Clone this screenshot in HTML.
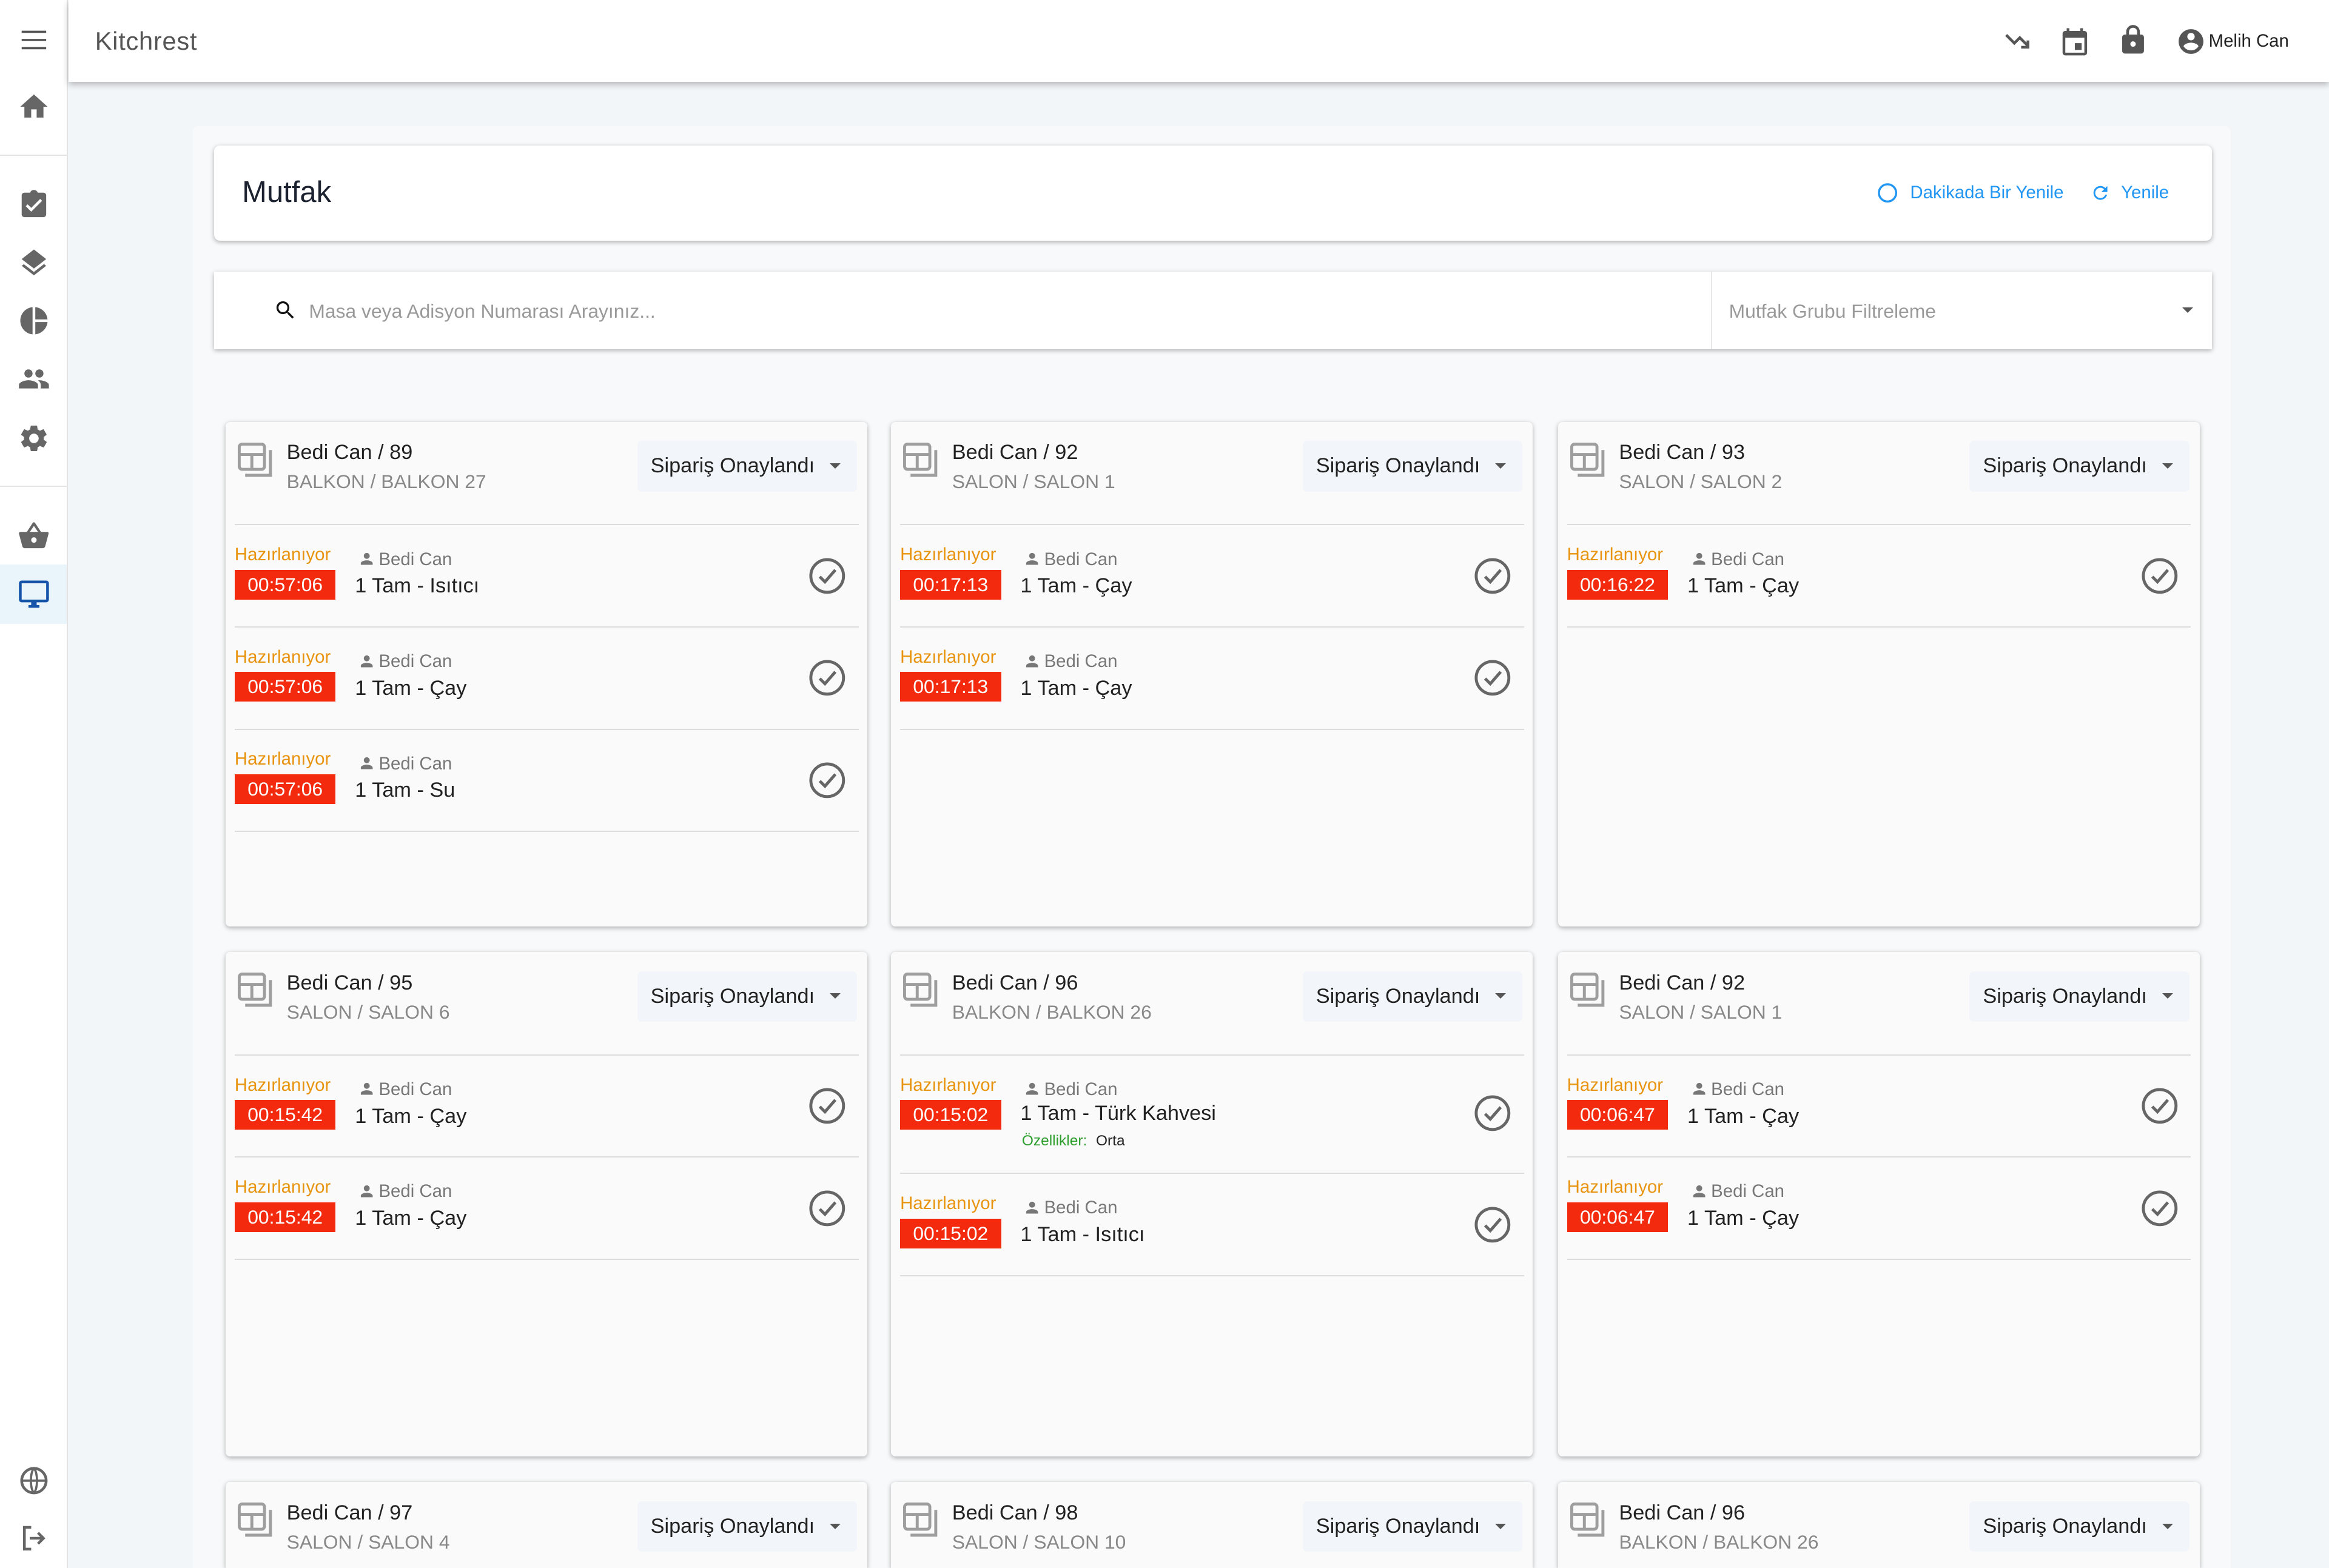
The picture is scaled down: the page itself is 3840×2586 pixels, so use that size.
<!DOCTYPE html>
<html><head><meta charset="utf-8"><style>
html,body{margin:0;padding:0;width:3840px;height:2586px;overflow:hidden;background:#f3f6f9}
#w{zoom:2.44898;width:1568px;height:1056px;position:relative;font-family:"Liberation Sans",sans-serif;background:#f3f6f9;overflow:hidden}
.abs{position:absolute}
#side{left:0;top:0;width:45px;height:1056px;background:#fff;border-right:1px solid #e3e3e3}
#top{left:46px;top:0;right:0;height:55px;background:#fff;box-shadow:0 2px 4px rgba(0,0,0,.25)}
.si{position:absolute;left:12px;width:22px;height:22px}
#panel{left:130px;top:85px;width:1372px;height:971px;background:#f8f9fa;border-radius:4px 4px 0 0}
.card{position:absolute;width:432px;height:340px;background:#fafafa;box-shadow:0 1px 3px rgba(0,0,0,.3);border-radius:3px}
.card.cut{height:58px;border-radius:3px 3px 0 0}
.ic{position:absolute;left:8px;top:14px}
.t1{position:absolute;left:41px;top:13px;font-size:14px;color:#222}
.t2{position:absolute;left:41px;top:33px;font-size:13px;color:#888}
.btn{position:absolute;right:7px;top:13px;width:148px;height:34px;background:#f2f5f9;border-radius:3px;font-size:14px;color:#222;line-height:34px;text-indent:9px}
.btn:after{content:"";position:absolute;right:11px;top:15px;border-left:4px solid transparent;border-right:4px solid transparent;border-top:4px solid #555}
.items{position:absolute;top:69px;left:6px;right:6px;border-top:1px solid #dcdcdc}
.it{position:relative;height:68px;border-bottom:1px solid #dcdcdc}
.it.big{height:79px}
.st{position:absolute;left:0;top:13px;font-size:12px;color:#e8940f}
.tm{position:absolute;left:0;top:30px;width:68px;height:20px;background:#f42a0e;color:#fff;font-size:13px;line-height:20px;text-align:center}
.us{position:absolute;left:83px;top:16px;font-size:12px;color:#777}
.us svg{vertical-align:-2px;margin-right:2px}
.dn{position:absolute;left:81px;top:33px;font-size:14px;color:#222}
.oz{position:absolute;left:82px;top:52px;font-size:10px;color:#2e9e2e}
.oz b{font-weight:normal;color:#222;margin-left:6px}
.ck{position:absolute;right:8px;top:21px}
.it.big .ck{top:26px}
</style></head><body><div id="w">
<div id="side" class="abs">
<svg class="si" style="top:16px" viewBox="0 0 24 24"><path d="M3 6h18M3 12h18M3 18h18" stroke="#555" stroke-width="1.6"/></svg>
<svg class="si" style="top:61px" viewBox="0 0 24 24"><path d="M10 20v-6h4v6h5v-8h3L12 3 2 12h3v8z" fill="#666"/></svg>
<div class="abs" style="left:0;top:104px;width:45px;border-top:1px solid #e3e3e3"></div>
<svg class="si" style="top:127px" viewBox="0 0 24 24"><path d="M19 3h-4.2C14.4 1.8 13.3 1 12 1s-2.4.8-2.8 2H5c-1.1 0-2 .9-2 2v14c0 1.1.9 2 2 2h14c1.1 0 2-.9 2-2V5c0-1.1-.9-2-2-2zm-9 14l-4-4 1.4-1.4 2.6 2.6 6.6-6.6L18 9l-8 8z" fill="#666"/></svg>
<svg class="si" style="top:166px" viewBox="0 0 24 24"><path d="M12 16.5l-7.4-5.7L3 12l9 7 9-7-1.6-1.3zM12 14l7.4-5.7L21 7l-9-7-9 7 1.6 1.3z" fill="#666" transform="translate(0 2)"/></svg>
<svg class="si" style="top:205px" viewBox="0 0 24 24"><path d="M11 2v20c-5.1-.5-9-4.8-9-10s3.9-9.5 9-10zm2 0v9h9c-.5-4.8-4.2-8.5-9-9zm0 11v9c4.7-.5 8.5-4.2 9-9z" fill="#666"/></svg>
<svg class="si" style="top:244px" viewBox="0 0 24 24"><path d="M16 11c1.7 0 3-1.3 3-3s-1.3-3-3-3-3 1.3-3 3 1.3 3 3 3zm-8 0c1.7 0 3-1.3 3-3S9.7 5 8 5 5 6.3 5 8s1.3 3 3 3zm0 2c-2.3 0-7 1.2-7 3.5V19h14v-2.5C15 14.2 10.3 13 8 13zm8 0c-.3 0-.6 0-1 .1 1.2.8 2 2 2 3.4V19h6v-2.5c0-2.3-4.7-3.5-7-3.5z" fill="#666"/></svg>
<svg class="si" style="top:284px" viewBox="0 0 24 24"><path d="M19.1 12.9c0-.3.1-.6.1-.9s0-.6-.1-.9l2-1.6c.2-.1.2-.4.1-.6l-1.9-3.3c-.1-.2-.4-.3-.6-.2l-2.4 1c-.5-.4-1-.7-1.6-.9L14.4 3c0-.2-.2-.4-.5-.4h-3.8c-.2 0-.4.2-.5.4l-.4 2.5c-.6.2-1.1.6-1.6.9l-2.4-1c-.2-.1-.5 0-.6.2L2.7 8.9c-.1.2-.1.5.1.6l2 1.6c0 .3-.1.6-.1.9s0 .6.1.9l-2 1.6c-.2.1-.2.4-.1.6l1.9 3.3c.1.2.4.3.6.2l2.4-1c.5.4 1 .7 1.6.9l.4 2.5c0 .2.2.4.5.4h3.8c.2 0 .4-.2.5-.4l.4-2.5c.6-.2 1.1-.6 1.600-.9l2.4 1c.2.1.5 0 .6-.2l1.9-3.3c.1-.2.1-.5-.1-.6zM12 15.5c-1.9 0-3.5-1.600-3.5-3.5s1.6-3.5 3.5-3.5 3.5 1.6 3.5 3.5-1.6 3.5-3.5 3.5z" fill="#666"/></svg>
<div class="abs" style="left:0;top:327px;width:45px;border-top:1px solid #e3e3e3"></div>
<svg class="si" style="top:350px" viewBox="0 0 24 24"><path d="M17.2 9l-4.4-6.6c-.4-.6-1.3-.6-1.7 0L6.8 9H2c-.6 0-1 .4-1 1v.3l2.5 9.3c.2.8 1 1.4 1.9 1.4h13c.9 0 1.7-.6 1.9-1.5l2.5-9.3V10c0-.6-.4-1-1-1h-4.6zM9 9l3-4.4L15 9H9zm3 8c-1.1 0-2-.9-2-2s.9-2 2-2 2 .9 2 2-.9 2-2 2z" fill="#666"/></svg>
<div class="abs" style="left:0;top:380px;width:45px;height:40px;background:#eaf4fb"></div>
<svg class="si" style="top:389px" viewBox="0 0 24 24"><path d="M21 2H3c-1.1 0-2 .9-2 2v12c0 1.1.9 2 2 2h7v2H8v2h8v-2h-2v-2h7c1.1 0 2-.9 2-2V4c0-1.1-.9-2-2-2zm0 14H3V4h18v12z" fill="#1553a8"/></svg>
<svg class="si" style="top:986px" viewBox="0 0 24 24"><circle cx="12" cy="12" r="9" fill="none" stroke="#666" stroke-width="2"/><path d="M3 12h18M12 3c3 3 3 15 0 18M12 3c-3 3-3 15 0 18" fill="none" stroke="#666" stroke-width="1.6"/></svg>
<svg class="si" style="top:1025px" viewBox="0 0 24 24"><path d="M10 4H5v16h5M15 8l4 4-4 4M19 12H9" fill="none" stroke="#666" stroke-width="2"/></svg>
</div>
<div id="top" class="abs">
<div class="abs" style="left:18px;top:18px;font-size:17px;color:#555;letter-spacing:.3px">Kitchrest</div>
<svg class="abs" style="left:1302px;top:17px" width="22" height="22" viewBox="0 0 24 24"><path d="M3 7l6 6 4-4 6 6M19 11v5h-5" fill="none" stroke="#555" stroke-width="2"/></svg>
<svg class="abs" style="left:1340px;top:17px" width="22" height="22" viewBox="0 0 24 24"><path d="M19 4h-1V2h-2v2H8V2H6v2H5c-1.1 0-2 .9-2 2v14c0 1.1.9 2 2 2h14c1.1 0 2-.9 2-2V6c0-1.1-.9-2-2-2zm0 16H5V9h14zM12 13h5v5h-5z" fill="#555"/></svg>
<svg class="abs" style="left:1379px;top:16px" width="22" height="22" viewBox="0 0 24 24"><path d="M18 8h-1V6c0-2.8-2.2-5-5-5S7 3.2 7 6v2H6c-1.1 0-2 .9-2 2v10c0 1.1.9 2 2 2h12c1.1 0 2-.9 2-2V10c0-1.1-.9-2-2-2zm-6 9c-1.1 0-2-.9-2-2s.9-2 2-2 2 .9 2 2-.9 2-2 2zM9 8V6c0-1.7 1.3-3 3-3s3 1.3 3 3v2z" fill="#555"/></svg>
<svg class="abs" style="left:1419px;top:18px" width="20" height="20" viewBox="0 0 24 24"><path d="M12 2C6.5 2 2 6.5 2 12s4.5 10 10 10 10-4.5 10-10S17.5 2 12 2zm0 3c1.7 0 3 1.3 3 3s-1.3 3-3 3-3-1.3-3-3 1.3-3 3-3zm0 14.2c-2.5 0-4.7-1.3-6-3.2 0-2 4-3.1 6-3.1s6 1.1 6 3.1c-1.3 1.9-3.5 3.2-6 3.2z" fill="#555"/></svg>
<div class="abs" style="left:1441px;top:21px;font-size:12px;color:#222">Melih Can</div>
</div>
<div id="panel" class="abs"></div>
<div class="abs" style="left:144px;top:98px;width:1345px;height:64px;background:#fff;border-radius:4px;box-shadow:0 1px 3px rgba(0,0,0,.3)">
<div class="abs" style="left:19px;top:20px;font-size:20px;color:#1c2230">Mutfak</div>
<svg class="abs" style="left:1120px;top:25px" width="14" height="14" viewBox="0 0 14 14"><circle cx="7" cy="7" r="5.8" fill="none" stroke="#2196f3" stroke-width="1.4"/></svg>
<div class="abs" style="left:1142px;top:25px;font-size:12px;color:#2196f3">Dakikada Bir Yenile</div>
<svg class="abs" style="left:1263px;top:25px" width="14" height="14" viewBox="0 0 24 24"><path d="M17.6 6.4C16.2 4.9 14.2 4 12 4c-4.4 0-8 3.6-8 8s3.6 8 8 8c3.7 0 6.8-2.5 7.7-6h-2.1c-.8 2.3-3 4-5.6 4-3.3 0-6-2.7-6-6s2.7-6 6-6c1.7 0 3.1.7 4.2 1.8L13 11h7V4z" fill="#2196f3"/></svg>
<div class="abs" style="left:1284px;top:25px;font-size:12px;color:#2196f3">Yenile</div>
</div>
<div class="abs" style="left:144px;top:183px;width:1345px;height:52px;background:#fff;box-shadow:0 1px 3px rgba(0,0,0,.3)">
<svg class="abs" style="left:40px;top:18px" width="16" height="16" viewBox="0 0 24 24"><path d="M15.5 14h-.8l-.3-.3c1-1.1 1.6-2.6 1.6-4.2C16 5.9 13.1 3 9.5 3S3 5.9 3 9.5 5.9 16 9.5 16c1.6 0 3.1-.6 4.2-1.6l.3.3v.8l5 5 1.5-1.5zm-6 0C7 14 5 12 5 9.5S7 5 9.5 5 14 7 14 9.5 12 14 9.5 14z" fill="#111"/></svg>
<div class="abs" style="left:64px;top:19px;font-size:13px;color:#999">Masa veya Adisyon Numarası Arayınız...</div>
<div class="abs" style="left:1008px;top:0;height:52px;border-left:1px solid #e6e6e6"></div>
<div class="abs" style="left:1020px;top:19px;font-size:13px;color:#999">Mutfak Grubu Filtreleme</div>
<div class="abs" style="left:1325px;top:24px;border-left:4px solid transparent;border-right:4px solid transparent;border-top:4px solid #555"></div>
</div>

<!-- row 1 -->
<div class="card" style="left:152px;top:284px">
<svg class="ic" width="25" height="25" viewBox="0 0 25 25"><rect x="1" y="1" width="17" height="17" rx="2" fill="none" stroke="#9e9e9e" stroke-width="2"/><path d="M1 8h17M9.5 8v10M22 5v17H5" fill="none" stroke="#9e9e9e" stroke-width="2"/></svg>
<div class="t1">Bedi Can / 89</div><div class="t2">BALKON / BALKON 27</div><div class="btn">Sipariş Onaylandı</div>
<div class="items">
<div class="it"><div class="st">Hazırlanıyor</div><div class="tm">00:57:06</div><div class="us"><svg width="12" height="12" viewBox="0 0 24 24"><path d="M12 12c2.2 0 4-1.8 4-4s-1.8-4-4-4-4 1.8-4 4 1.8 4 4 4zm0 2c-2.7 0-8 1.3-8 4v2h16v-2c0-2.7-5.3-4-8-4z" fill="#777"/></svg>Bedi Can</div><div class="dn">1 Tam - Isıtıcı</div><svg class="ck" width="26" height="26" viewBox="0 0 26 26"><circle cx="13" cy="13" r="11" fill="none" stroke="#666" stroke-width="2"/><path d="M8 13.5l3.5 3.5 7-8" fill="none" stroke="#666" stroke-width="2"/></svg></div>
<div class="it"><div class="st">Hazırlanıyor</div><div class="tm">00:57:06</div><div class="us"><svg width="12" height="12" viewBox="0 0 24 24"><path d="M12 12c2.2 0 4-1.8 4-4s-1.8-4-4-4-4 1.8-4 4 1.8 4 4 4zm0 2c-2.7 0-8 1.3-8 4v2h16v-2c0-2.7-5.3-4-8-4z" fill="#777"/></svg>Bedi Can</div><div class="dn">1 Tam - Çay</div><svg class="ck" width="26" height="26" viewBox="0 0 26 26"><circle cx="13" cy="13" r="11" fill="none" stroke="#666" stroke-width="2"/><path d="M8 13.5l3.5 3.5 7-8" fill="none" stroke="#666" stroke-width="2"/></svg></div>
<div class="it"><div class="st">Hazırlanıyor</div><div class="tm">00:57:06</div><div class="us"><svg width="12" height="12" viewBox="0 0 24 24"><path d="M12 12c2.2 0 4-1.8 4-4s-1.8-4-4-4-4 1.8-4 4 1.8 4 4 4zm0 2c-2.7 0-8 1.3-8 4v2h16v-2c0-2.7-5.3-4-8-4z" fill="#777"/></svg>Bedi Can</div><div class="dn">1 Tam - Su</div><svg class="ck" width="26" height="26" viewBox="0 0 26 26"><circle cx="13" cy="13" r="11" fill="none" stroke="#666" stroke-width="2"/><path d="M8 13.5l3.5 3.5 7-8" fill="none" stroke="#666" stroke-width="2"/></svg></div>
</div></div>

<div class="card" style="left:600px;top:284px">
<svg class="ic" width="25" height="25" viewBox="0 0 25 25"><rect x="1" y="1" width="17" height="17" rx="2" fill="none" stroke="#9e9e9e" stroke-width="2"/><path d="M1 8h17M9.5 8v10M22 5v17H5" fill="none" stroke="#9e9e9e" stroke-width="2"/></svg>
<div class="t1">Bedi Can / 92</div><div class="t2">SALON / SALON 1</div><div class="btn">Sipariş Onaylandı</div>
<div class="items">
<div class="it"><div class="st">Hazırlanıyor</div><div class="tm">00:17:13</div><div class="us"><svg width="12" height="12" viewBox="0 0 24 24"><path d="M12 12c2.2 0 4-1.8 4-4s-1.8-4-4-4-4 1.8-4 4 1.8 4 4 4zm0 2c-2.7 0-8 1.3-8 4v2h16v-2c0-2.7-5.3-4-8-4z" fill="#777"/></svg>Bedi Can</div><div class="dn">1 Tam - Çay</div><svg class="ck" width="26" height="26" viewBox="0 0 26 26"><circle cx="13" cy="13" r="11" fill="none" stroke="#666" stroke-width="2"/><path d="M8 13.5l3.5 3.5 7-8" fill="none" stroke="#666" stroke-width="2"/></svg></div>
<div class="it"><div class="st">Hazırlanıyor</div><div class="tm">00:17:13</div><div class="us"><svg width="12" height="12" viewBox="0 0 24 24"><path d="M12 12c2.2 0 4-1.8 4-4s-1.8-4-4-4-4 1.8-4 4 1.8 4 4 4zm0 2c-2.7 0-8 1.3-8 4v2h16v-2c0-2.7-5.3-4-8-4z" fill="#777"/></svg>Bedi Can</div><div class="dn">1 Tam - Çay</div><svg class="ck" width="26" height="26" viewBox="0 0 26 26"><circle cx="13" cy="13" r="11" fill="none" stroke="#666" stroke-width="2"/><path d="M8 13.5l3.5 3.5 7-8" fill="none" stroke="#666" stroke-width="2"/></svg></div>
</div></div>

<div class="card" style="left:1049px;top:284px">
<svg class="ic" width="25" height="25" viewBox="0 0 25 25"><rect x="1" y="1" width="17" height="17" rx="2" fill="none" stroke="#9e9e9e" stroke-width="2"/><path d="M1 8h17M9.5 8v10M22 5v17H5" fill="none" stroke="#9e9e9e" stroke-width="2"/></svg>
<div class="t1">Bedi Can / 93</div><div class="t2">SALON / SALON 2</div><div class="btn">Sipariş Onaylandı</div>
<div class="items">
<div class="it"><div class="st">Hazırlanıyor</div><div class="tm">00:16:22</div><div class="us"><svg width="12" height="12" viewBox="0 0 24 24"><path d="M12 12c2.2 0 4-1.8 4-4s-1.8-4-4-4-4 1.8-4 4 1.8 4 4 4zm0 2c-2.7 0-8 1.3-8 4v2h16v-2c0-2.7-5.3-4-8-4z" fill="#777"/></svg>Bedi Can</div><div class="dn">1 Tam - Çay</div><svg class="ck" width="26" height="26" viewBox="0 0 26 26"><circle cx="13" cy="13" r="11" fill="none" stroke="#666" stroke-width="2"/><path d="M8 13.5l3.5 3.5 7-8" fill="none" stroke="#666" stroke-width="2"/></svg></div>
</div></div>

<!-- row 2 -->
<div class="card" style="left:152px;top:641px">
<svg class="ic" width="25" height="25" viewBox="0 0 25 25"><rect x="1" y="1" width="17" height="17" rx="2" fill="none" stroke="#9e9e9e" stroke-width="2"/><path d="M1 8h17M9.5 8v10M22 5v17H5" fill="none" stroke="#9e9e9e" stroke-width="2"/></svg>
<div class="t1">Bedi Can / 95</div><div class="t2">SALON / SALON 6</div><div class="btn">Sipariş Onaylandı</div>
<div class="items">
<div class="it"><div class="st">Hazırlanıyor</div><div class="tm">00:15:42</div><div class="us"><svg width="12" height="12" viewBox="0 0 24 24"><path d="M12 12c2.2 0 4-1.8 4-4s-1.8-4-4-4-4 1.8-4 4 1.8 4 4 4zm0 2c-2.7 0-8 1.3-8 4v2h16v-2c0-2.7-5.3-4-8-4z" fill="#777"/></svg>Bedi Can</div><div class="dn">1 Tam - Çay</div><svg class="ck" width="26" height="26" viewBox="0 0 26 26"><circle cx="13" cy="13" r="11" fill="none" stroke="#666" stroke-width="2"/><path d="M8 13.5l3.5 3.5 7-8" fill="none" stroke="#666" stroke-width="2"/></svg></div>
<div class="it"><div class="st">Hazırlanıyor</div><div class="tm">00:15:42</div><div class="us"><svg width="12" height="12" viewBox="0 0 24 24"><path d="M12 12c2.2 0 4-1.8 4-4s-1.8-4-4-4-4 1.8-4 4 1.8 4 4 4zm0 2c-2.7 0-8 1.3-8 4v2h16v-2c0-2.7-5.3-4-8-4z" fill="#777"/></svg>Bedi Can</div><div class="dn">1 Tam - Çay</div><svg class="ck" width="26" height="26" viewBox="0 0 26 26"><circle cx="13" cy="13" r="11" fill="none" stroke="#666" stroke-width="2"/><path d="M8 13.5l3.5 3.5 7-8" fill="none" stroke="#666" stroke-width="2"/></svg></div>
</div></div>

<div class="card" style="left:600px;top:641px">
<svg class="ic" width="25" height="25" viewBox="0 0 25 25"><rect x="1" y="1" width="17" height="17" rx="2" fill="none" stroke="#9e9e9e" stroke-width="2"/><path d="M1 8h17M9.5 8v10M22 5v17H5" fill="none" stroke="#9e9e9e" stroke-width="2"/></svg>
<div class="t1">Bedi Can / 96</div><div class="t2">BALKON / BALKON 26</div><div class="btn">Sipariş Onaylandı</div>
<div class="items">
<div class="it big"><div class="st">Hazırlanıyor</div><div class="tm">00:15:02</div><div class="us"><svg width="12" height="12" viewBox="0 0 24 24"><path d="M12 12c2.2 0 4-1.8 4-4s-1.8-4-4-4-4 1.8-4 4 1.8 4 4 4zm0 2c-2.7 0-8 1.3-8 4v2h16v-2c0-2.7-5.3-4-8-4z" fill="#777"/></svg>Bedi Can</div><div class="dn" style="top:31px">1 Tam - Türk Kahvesi</div><div class="oz">Özellikler:<b>Orta</b></div><svg class="ck" width="26" height="26" viewBox="0 0 26 26"><circle cx="13" cy="13" r="11" fill="none" stroke="#666" stroke-width="2"/><path d="M8 13.5l3.5 3.5 7-8" fill="none" stroke="#666" stroke-width="2"/></svg></div>
<div class="it"><div class="st">Hazırlanıyor</div><div class="tm">00:15:02</div><div class="us"><svg width="12" height="12" viewBox="0 0 24 24"><path d="M12 12c2.2 0 4-1.8 4-4s-1.8-4-4-4-4 1.8-4 4 1.8 4 4 4zm0 2c-2.7 0-8 1.3-8 4v2h16v-2c0-2.7-5.3-4-8-4z" fill="#777"/></svg>Bedi Can</div><div class="dn">1 Tam - Isıtıcı</div><svg class="ck" width="26" height="26" viewBox="0 0 26 26"><circle cx="13" cy="13" r="11" fill="none" stroke="#666" stroke-width="2"/><path d="M8 13.5l3.5 3.5 7-8" fill="none" stroke="#666" stroke-width="2"/></svg></div>
</div></div>

<div class="card" style="left:1049px;top:641px">
<svg class="ic" width="25" height="25" viewBox="0 0 25 25"><rect x="1" y="1" width="17" height="17" rx="2" fill="none" stroke="#9e9e9e" stroke-width="2"/><path d="M1 8h17M9.5 8v10M22 5v17H5" fill="none" stroke="#9e9e9e" stroke-width="2"/></svg>
<div class="t1">Bedi Can / 92</div><div class="t2">SALON / SALON 1</div><div class="btn">Sipariş Onaylandı</div>
<div class="items">
<div class="it"><div class="st">Hazırlanıyor</div><div class="tm">00:06:47</div><div class="us"><svg width="12" height="12" viewBox="0 0 24 24"><path d="M12 12c2.2 0 4-1.8 4-4s-1.8-4-4-4-4 1.8-4 4 1.8 4 4 4zm0 2c-2.7 0-8 1.3-8 4v2h16v-2c0-2.7-5.3-4-8-4z" fill="#777"/></svg>Bedi Can</div><div class="dn">1 Tam - Çay</div><svg class="ck" width="26" height="26" viewBox="0 0 26 26"><circle cx="13" cy="13" r="11" fill="none" stroke="#666" stroke-width="2"/><path d="M8 13.5l3.5 3.5 7-8" fill="none" stroke="#666" stroke-width="2"/></svg></div>
<div class="it"><div class="st">Hazırlanıyor</div><div class="tm">00:06:47</div><div class="us"><svg width="12" height="12" viewBox="0 0 24 24"><path d="M12 12c2.2 0 4-1.8 4-4s-1.8-4-4-4-4 1.8-4 4 1.8 4 4 4zm0 2c-2.7 0-8 1.3-8 4v2h16v-2c0-2.7-5.3-4-8-4z" fill="#777"/></svg>Bedi Can</div><div class="dn">1 Tam - Çay</div><svg class="ck" width="26" height="26" viewBox="0 0 26 26"><circle cx="13" cy="13" r="11" fill="none" stroke="#666" stroke-width="2"/><path d="M8 13.5l3.5 3.5 7-8" fill="none" stroke="#666" stroke-width="2"/></svg></div>
</div></div>

<!-- row 3 -->
<div class="card cut" style="left:152px;top:998px">
<svg class="ic" width="25" height="25" viewBox="0 0 25 25"><rect x="1" y="1" width="17" height="17" rx="2" fill="none" stroke="#9e9e9e" stroke-width="2"/><path d="M1 8h17M9.5 8v10M22 5v17H5" fill="none" stroke="#9e9e9e" stroke-width="2"/></svg>
<div class="t1">Bedi Can / 97</div><div class="t2">SALON / SALON 4</div><div class="btn">Sipariş Onaylandı</div></div>
<div class="card cut" style="left:600px;top:998px">
<svg class="ic" width="25" height="25" viewBox="0 0 25 25"><rect x="1" y="1" width="17" height="17" rx="2" fill="none" stroke="#9e9e9e" stroke-width="2"/><path d="M1 8h17M9.5 8v10M22 5v17H5" fill="none" stroke="#9e9e9e" stroke-width="2"/></svg>
<div class="t1">Bedi Can / 98</div><div class="t2">SALON / SALON 10</div><div class="btn">Sipariş Onaylandı</div></div>
<div class="card cut" style="left:1049px;top:998px">
<svg class="ic" width="25" height="25" viewBox="0 0 25 25"><rect x="1" y="1" width="17" height="17" rx="2" fill="none" stroke="#9e9e9e" stroke-width="2"/><path d="M1 8h17M9.5 8v10M22 5v17H5" fill="none" stroke="#9e9e9e" stroke-width="2"/></svg>
<div class="t1">Bedi Can / 96</div><div class="t2">BALKON / BALKON 26</div><div class="btn">Sipariş Onaylandı</div></div>
</div></body></html>
